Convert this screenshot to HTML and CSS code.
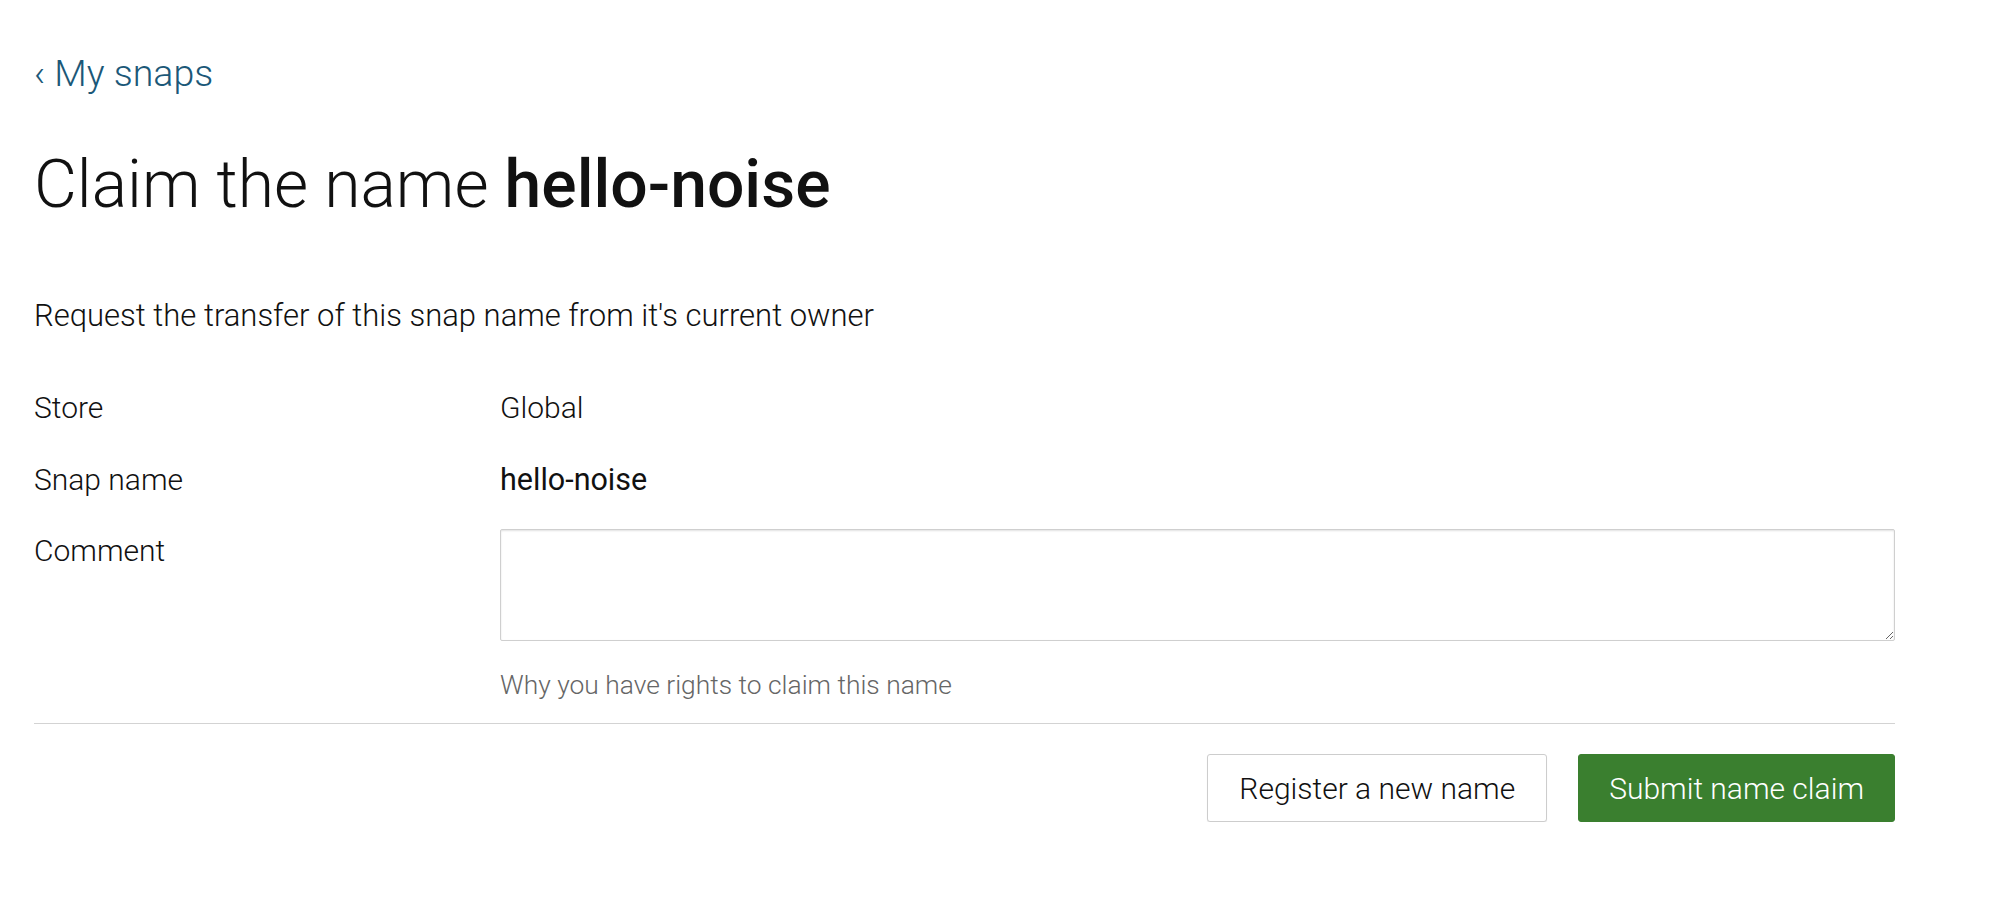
FILE: index.html
```html
<!DOCTYPE html>
<html lang="en">
<head>
<meta charset="utf-8">
<title>Claim the name hello-noise</title>
<link rel="stylesheet" href="styles.css">
</head>
<body>
<main class="page">
  <a class="back-link" href="#">&lsaquo; My snaps</a>
  <h1 class="title">Claim the name <strong class="title-strong">hello-noise</strong></h1>
  <p class="intro">Request the transfer of this snap name from it's current owner</p>
  <form class="claim-form">
    <div class="row row-store">
      <span class="label">Store</span>
      <span class="value">Global</span>
    </div>
    <div class="row row-name">
      <span class="label">Snap name</span>
      <span class="value value-strong">hello-noise</span>
    </div>
    <div class="row row-comment">
      <label class="label label-comment" for="comment">Comment</label>
      <div class="field">
        <textarea id="comment" class="textarea"></textarea>
        <p class="help">Why you have rights to claim this name</p>
      </div>
    </div>
    <hr class="divider">
    <div class="actions">
      <button type="button" class="btn btn-neutral">Register a new name</button>
      <button type="submit" class="btn btn-positive">Submit name claim</button>
    </div>
  </form>
</main>
</body>
</html>
```

FILE: styles.css
```css
html, body {
  margin: 0;
  padding: 0;
  background: #ffffff;
}

body {
  font-family: Roboto, "Liberation Sans", sans-serif;
  font-weight: 300;
  color: #111111;
}

.page {
  padding: 53px 104px 0 34px;
}

.back-link {
  display: block;
  font-size: 37.5px;
  line-height: 40px;
  font-weight: 300;
  color: #1b5878;
  text-decoration: none;
}

.title {
  margin: 52px 0 0;
  font-size: 66px;
  line-height: 80px;
  font-weight: 300;
  color: #111111;
}

.title-strong {
  font-weight: 500;
}

.intro {
  margin: 71px 0 0;
  font-size: 31px;
  line-height: 40px;
}

.claim-form {
  margin: 52px 0 0;
}

.row {
  display: grid;
  grid-template-columns: 466px 1fr;
  font-size: 30px;
  line-height: 40px;
}

.row-name {
  margin-top: 32px;
}

.row-comment {
  margin-top: 29px;
}

.label-comment {
  padding-top: 2px;
}

.value-strong {
  font-weight: 400;
  font-size: 30.5px;
}

.field {
  display: flex;
  flex-direction: column;
}

.textarea {
  box-sizing: border-box;
  display: block;
  width: 100%;
  height: 112px;
  margin: 0;
  border: 1px solid #cfcfcf;
  border-radius: 2px;
  box-shadow: inset 0 1px 2px rgba(0, 0, 0, 0.12);
  background: #ffffff;
  font-family: inherit;
  font-size: 30px;
}

.help {
  margin: 26px 0 0;
  font-size: 26.4px;
  line-height: 36px;
  color: #666666;
}

.divider {
  margin: 20px 0 0;
  border: 0;
  height: 1px;
  background: #d3d3d3;
}

.actions {
  display: flex;
  justify-content: flex-end;
  gap: 31px;
  margin-top: 30px;
}

.btn {
  box-sizing: border-box;
  height: 68px;
  padding: 0 30px;
  border-radius: 3px;
  font-family: inherit;
  font-size: 30px;
  font-weight: 300;
  cursor: pointer;
}

.btn-neutral {
  padding: 0 31px;
  background: #ffffff;
  color: #111111;
  border: 1px solid #cdcdcd;
  box-shadow: 0 1px 1px rgba(0, 0, 0, 0.08);
}

.btn-positive {
  background: #3a7f2f;
  color: #ffffff;
  border: 1px solid #3a7f2f;
}
```
